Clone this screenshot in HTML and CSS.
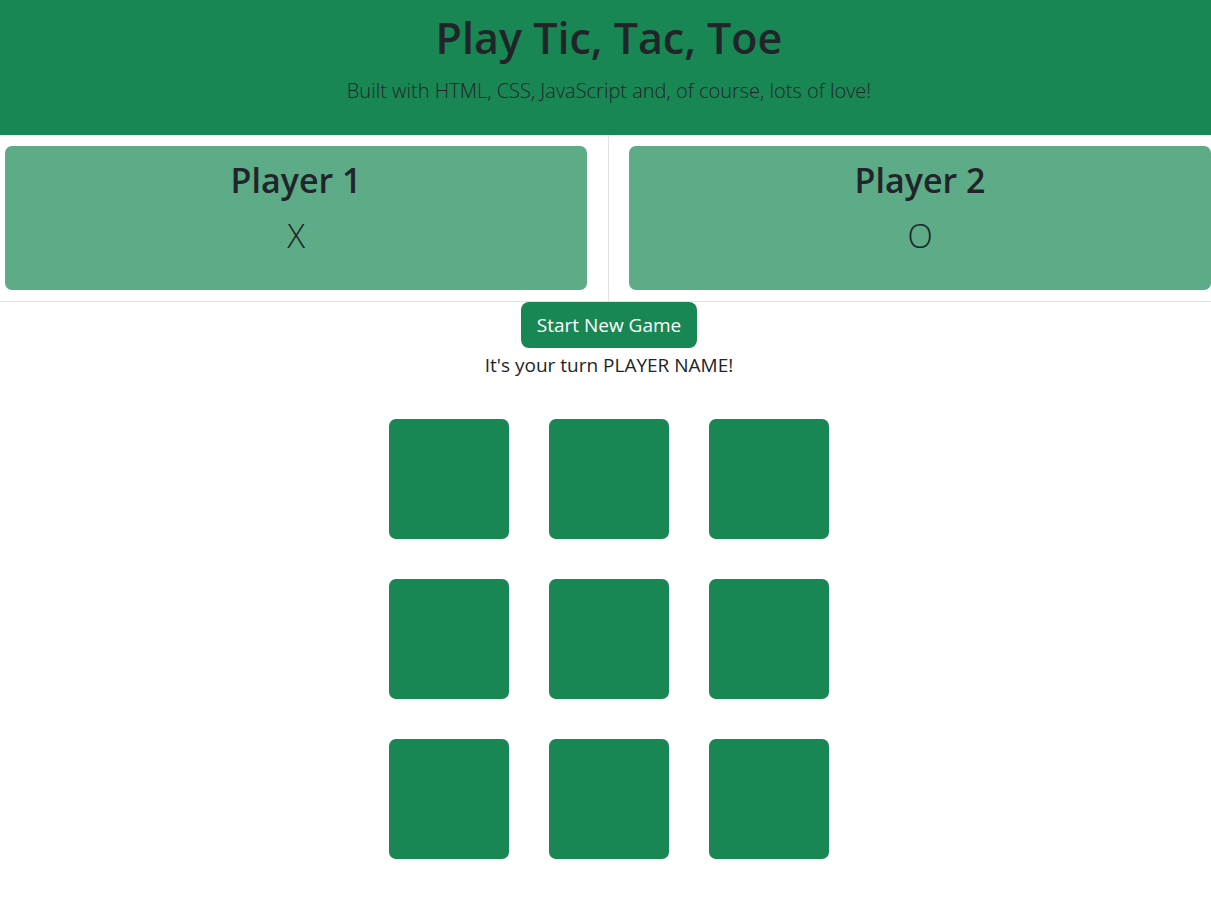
FILE: index.html
```html
<!DOCTYPE html>
<html lang="en">
    <head>
        <meta charset="utf-8">
        <title>Tic, Tac, Toe</title>
        <link rel="stylesheet" href="styles.css">
    </head>
    <body>
        <div class="page">
            <header class="banner">
                <h1>Play Tic, Tac, Toe</h1>
                <p class="lead">Built with HTML, CSS, JavaScript and, of course, lots of love!</p>
            </header>

            <section class="players">
                <div class="player-col">
                    <div class="player-card">
                        <h2>Player 1</h2>
                        <p class="mark">X</p>
                    </div>
                </div>
                <div class="player-col">
                    <div class="player-card">
                        <h2>Player 2</h2>
                        <p class="mark">O</p>
                    </div>
                </div>
            </section>

            <div class="controls">
                <button class="btn-start">Start New Game</button>
                <p class="turn">It's your turn PLAYER NAME!</p>
            </div>

            <div class="board">
                <div class="cell"></div>
                <div class="cell"></div>
                <div class="cell"></div>
                <div class="cell"></div>
                <div class="cell"></div>
                <div class="cell"></div>
                <div class="cell"></div>
                <div class="cell"></div>
                <div class="cell"></div>
            </div>
        </div>
    </body>
</html>
```

FILE: styles.css
```css
html, body, h1, h2, p {
    margin: 0;
    padding: 0;
}

body {
    overflow-x: hidden;
    font-family: "Open Sans", "Noto Sans", sans-serif;
    color: #212529;
    background: #fff;
}

.page {
    width: calc(100% + 7px);
}

.banner {
    background: #198754;
    text-align: center;
    padding: 12px 0 29px;
}

.banner h1 {
    font-size: 43px;
    font-weight: 600;
    line-height: 1.2;
    margin-bottom: 12px;
}

.lead {
    font-size: 20px;
    font-weight: 300;
    line-height: 1.5;
}

.players {
    display: grid;
    grid-template-columns: 1fr 1fr;
    border-bottom: 1px solid #dee2e6;
}

.player-col {
    padding: 11px 21px 11px 5px;
    border-right: 1px solid #dee2e6;
}

.player-col + .player-col {
    padding: 11px 7px 11px 20px;
    border-right: none;
}

.player-card {
    background: #5eab87;
    border-radius: 7px;
    text-align: center;
    padding: 14px 0 29px;
}

.player-card h2 {
    font-size: 34px;
    font-weight: 600;
    line-height: 1.2;
    margin-bottom: 11px;
}

.mark {
    font-size: 33px;
    font-weight: 300;
    line-height: 1.5;
}

.controls {
    display: flex;
    flex-direction: column;
    align-items: center;
}

.btn-start {
    font-family: inherit;
    font-size: 19px;
    line-height: 30px;
    padding: 8px 16px;
    color: #fff;
    background: #198754;
    border: none;
    border-radius: 8px;
    cursor: pointer;
}

.turn {
    margin-top: 2px;
    font-size: 19px;
    line-height: 30px;
}

.board {
    display: grid;
    grid-template-columns: repeat(3, 120px);
    grid-auto-rows: 120px;
    gap: 40px;
    justify-content: center;
    margin-top: 39px;
}

.cell {
    background: #198754;
    border-radius: 7px;
}
```
